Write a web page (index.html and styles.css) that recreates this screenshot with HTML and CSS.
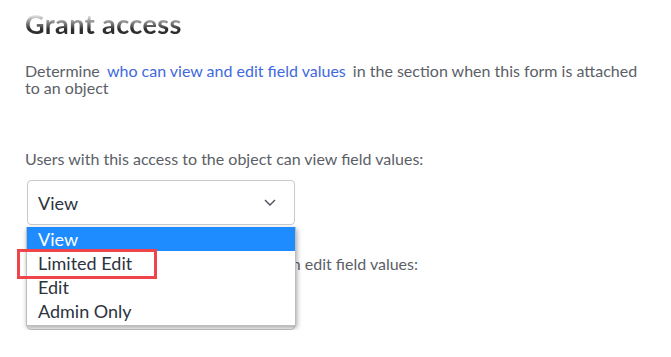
FILE: index.html
```html
<!DOCTYPE html>
<html lang="en">
<head>
  <meta charset="UTF-8">
  <meta name="viewport" content="width=device-width, initial-scale=1.0">
  <title>Grant access</title>
  <link rel="stylesheet" href="styles.css">
</head>
<body>
  <section class="grant">
    <h1 class="grant-title">Grant access</h1>
    <p class="grant-desc">Determine <a href="#">who can view and edit field values</a> in the section when this form is attached to an object</p>

    <div class="field">
      <p class="field-label">Users with this access to the object can view field values:</p>
      <div class="picker open">
        <div class="picker-value">View
          <svg class="chev" width="12" height="7" viewBox="0 0 12 7"><path d="M1 1l5 5 5-5" fill="none" stroke="#4a4f58" stroke-width="1.4"/></svg>
        </div>
        <ul class="picker-menu">
          <li class="picker-item active">View</li>
          <li class="picker-item marked">Limited Edit</li>
          <li class="picker-item">Edit</li>
          <li class="picker-item">Admin Only</li>
        </ul>
      </div>
    </div>

    <div class="field">
      <p class="field-label">Users with this access to the object can edit field values:</p>
      <div class="picker">
        <div class="picker-value">Edit
          <svg class="chev" width="12" height="7" viewBox="0 0 12 7"><path d="M1 1l5 5 5-5" fill="none" stroke="#4a4f58" stroke-width="1.4"/></svg>
        </div>
      </div>
    </div>
  </section>
</body>
</html>
```

FILE: styles.css
```css
html, body { margin:0;padding:0;background:#fff }
body { font-family:Lato, "Liberation Sans", sans-serif;color:#5b6067 }
.grant { padding:0 0 0 25px;width:622px }
.grant-title { display:inline-block;margin:9px 0 0;font-size:27px;line-height:30px;font-weight:700;letter-spacing:.4px;color:#2b2b2b;
  background:linear-gradient(#f2f2f2 18%, #9a9a9a 40%, #2e2e2e 68%);-webkit-background-clip:text;background-clip:text;-webkit-text-fill-color:transparent }
.grant-desc { margin:23px 0 0;font-size:16px;line-height:17px }
.grant-desc a { color:#4169dd;text-decoration:none;margin:0 3px }
.field { margin-top:54px }
.field + .field { margin-top:30px }
.field-label { margin:0 0 12px;font-size:16px;line-height:18px }
.picker { position:relative;width:268px;margin-left:2px }
.picker-value { height:43px;border:1px solid #c9c9c9;border-radius:4px;display:flex;align-items:center;justify-content:space-between;
  padding:0 18px 0 10px;font-size:18px;color:#2c3440 }
.picker-menu { position:absolute;left:-1px;top:47px;width:268px;margin:0;padding:0 0 2px;list-style:none;background:#fff;
  border:1px solid #bdbdbd;border-top:none;box-shadow:1px 2px 5px rgba(0,0,0,.35);z-index:2 }
.picker-item { height:24px;line-height:24px;padding-left:11px;font-size:18px;color:#2c3440 }
.picker-item.active { background:#1e8cff;color:#fff }
.picker-item.marked { position:relative }
.picker-item.marked::after { content:"";position:absolute;left:-10px;top:-2px;width:134px;height:24px;border:3px solid #f0444b }
```
